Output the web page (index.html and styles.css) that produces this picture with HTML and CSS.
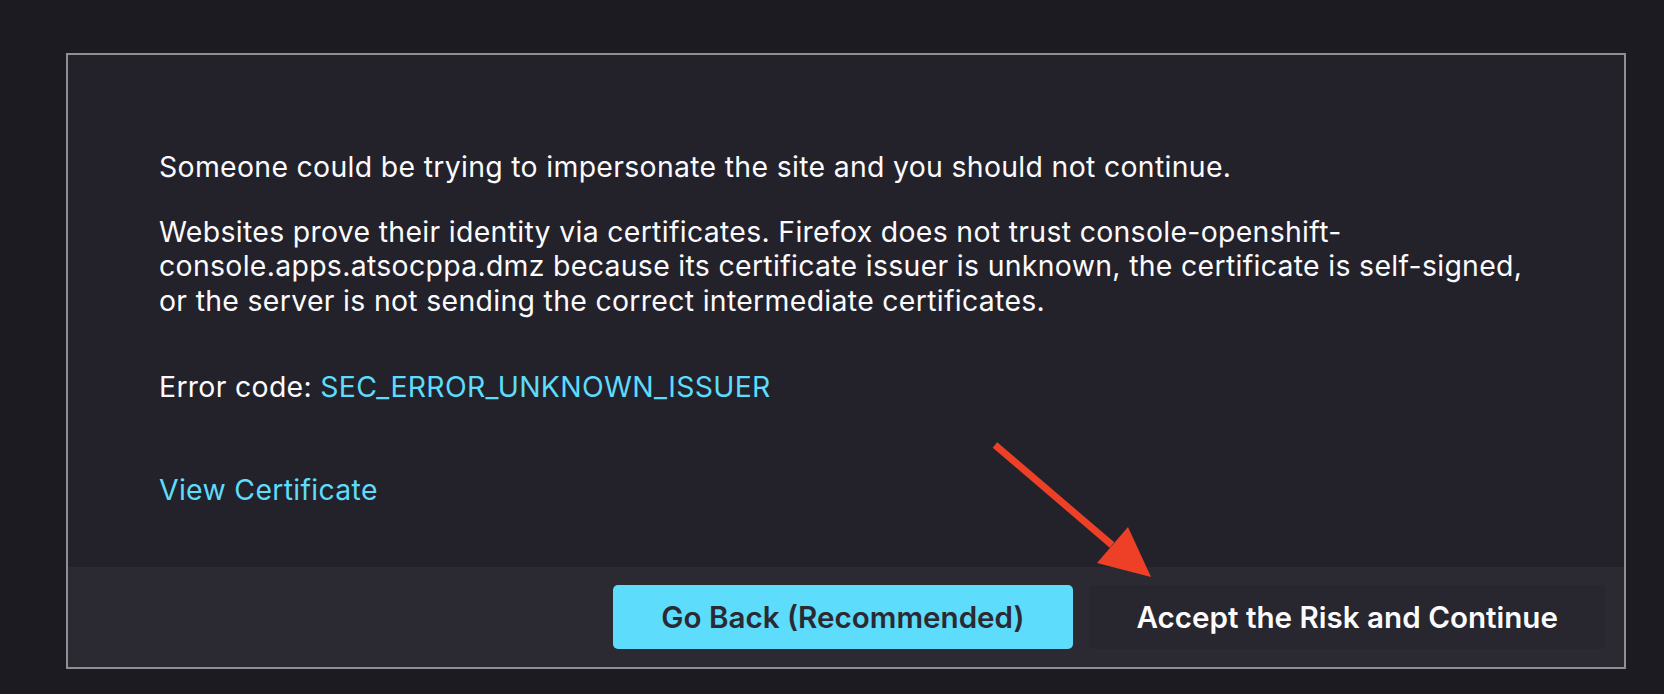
FILE: index.html
```html
<!DOCTYPE html>
<html lang="en">
<head>
<meta charset="utf-8">
<title>Warning: Potential Security Risk Ahead</title>
<link rel="stylesheet" href="styles.css">
</head>
<body>
<div class="panel">
  <div class="content">
    <p class="lead">Someone could be trying to impersonate the site and you should not continue.</p>
    <p class="explain">Websites prove their identity via certificates. Firefox does not trust console-openshift-console.apps.atsocppa.dmz because its certificate issuer is unknown, the certificate is self-signed, or the server is not sending the correct intermediate certificates.</p>
    <p class="code">Error code: <a class="link" href="#">SEC_ERROR_UNKNOWN_ISSUER</a></p>
    <p class="cert"><a class="link" href="#">View Certificate</a></p>
  </div>
  <div class="actions">
    <button class="btn primary">Go Back (Recommended)</button>
    <button class="btn secondary">Accept the Risk and Continue</button>
  </div>
  <svg class="arrow" width="180" height="160" viewBox="0 0 180 160">
    <line x1="15" y1="15" x2="132" y2="115" stroke="#ee4027" stroke-width="7"/>
    <polygon points="148,97 117,133 171,147" fill="#ee4027"/>
  </svg>
</div>
</body>
</html>
```
FILE: styles.css
```css
html, body {
  margin: 0;
  padding: 0;
}
body {
  background: #1c1b22;
  font-family: Inter, "Noto Sans", sans-serif;
  color: #fbfbfe;
  width: 1664px;
  height: 694px;
  overflow: hidden;
}
.panel {
  position: relative;
  box-sizing: border-box;
  margin: 53px 0 0 66px;
  width: 1560px;
  height: 616px;
  border: 2px solid #8e8e93;
  background: #23222b;
  display: flex;
  flex-direction: column;
}
.content {
  flex: 1;
  padding: 95px 0 0 91px;
  font-size: 28.4px;
  line-height: 34.5px;
  letter-spacing: 0.32px;
}
.content p {
  margin: 0;
}
.lead {
  margin-bottom: 30px !important;
}
.explain {
  width: 1378px;
  margin-bottom: 52px !important;
}
.cert {
  margin-top: 68px !important;
}
.link {
  color: #5ddcfb;
  text-decoration: none;
}
.actions {
  height: 100px;
  box-sizing: border-box;
  background: #2b2a33;
  display: flex;
  justify-content: flex-end;
  align-items: center;
  gap: 16px;
  padding: 0 18px;
}
.btn {
  height: 64px;
  padding: 0 48px;
  border: none;
  border-radius: 5px;
  font-family: Inter, "Noto Sans", sans-serif;
  font-size: 29.6px;
  font-weight: 600;
}
.primary {
  background: #5ddcfb;
  color: #2b2a33;
}
.secondary {
  background: #28272f;
  color: #fbfbfe;
}
.arrow {
  position: absolute;
  left: 912px;
  top: 375px;
}
```
